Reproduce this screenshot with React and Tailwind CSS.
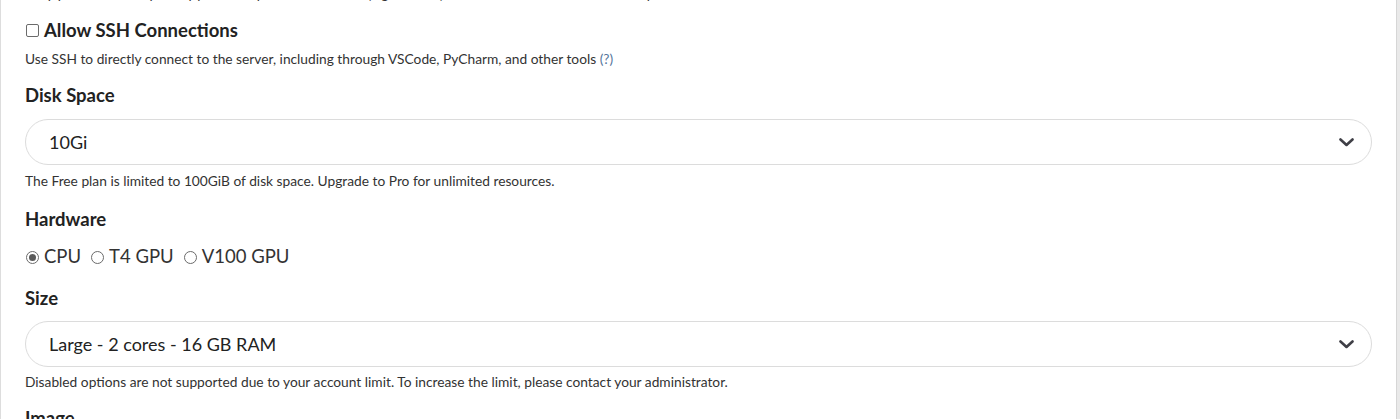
import React from 'react';

function Chevron() {
  return (
    <svg width="15" height="9" viewBox="0 0 15 9" fill="none">
      <path d="M1.5 1.5 L7.5 7 L13.5 1.5" stroke="#3f3f46" strokeWidth="2.6" strokeLinecap="round" strokeLinejoin="round" />
    </svg>
  );
}

function Select({ value }) {
  return (
    <div className="flex items-center justify-between h-[46px] rounded-full border border-[#dcdcdc] pl-[23px] pr-[17px] text-[18px] text-[#222]">
      <span>{value}</span>
      <Chevron />
    </div>
  );
}

function Radio({ checked, label }) {
  return (
    <label className="flex items-center gap-[5px] mr-[10px]">
      <span className="flex items-center justify-center w-[13px] h-[13px] rounded-full border border-[#6b6b6b]">
        {checked && <span className="w-[7px] h-[7px] rounded-full bg-[#5a5a5a]" />}
      </span>
      <span>{label}</span>
    </label>
  );
}

export default function App() {
  return (
    <div className="flex w-[1400px] h-[419px] overflow-hidden bg-white font-['Lato','Noto_Sans',sans-serif] text-[#222]">
      <div className="flex-1 flex flex-col border-l border-[#dddddd] pl-[24px] pr-[24px]">
        {/* clipped line from the section above */}
        <p className="mt-[-15px] text-[13.75px] leading-[18px] text-[#333]">
          Only your work that you copy into the persistent volume (e.g. ~/work) will be saved when the server stops.
        </p>

        {/* SSH */}
        <label className="mt-[15px] flex items-center gap-[5px] h-[24px]">
          <span className="w-[13px] h-[13px] ml-[1px] rounded-[2px] border border-[#6b6b6b] bg-white" />
          <span className="text-[18.5px] leading-[24px] font-bold">Allow SSH Connections</span>
        </label>
        <p className="mt-[8px] text-[13.75px] leading-[18px] text-[#333]">
          Use SSH to directly connect to the server, including through VSCode, PyCharm, and other tools{' '}
          <span className="text-[#55759b]">(?)</span>
        </p>

        {/* Disk */}
        <h3 className="mt-[15px] text-[18.5px] leading-[24px] font-bold">Disk Space</h3>
        <div className="mt-[12px]">
          <Select value="10Gi" />
        </div>
        <p className="mt-[7px] text-[13.75px] leading-[18px] text-[#333]">
          The Free plan is limited to 100GiB of disk space. Upgrade to Pro for unlimited resources.
        </p>

        {/* Hardware */}
        <h3 className="mt-[17px] text-[18.5px] leading-[24px] font-bold">Hardware</h3>
        <div className="mt-[14px] flex items-center h-[24px] text-[18.5px] text-[#333] ml-[1px]">
          <Radio checked label="CPU" />
          <Radio label="T4 GPU" />
          <Radio label="V100 GPU" />
        </div>

        {/* Size */}
        <h3 className="mt-[17px] text-[18.5px] leading-[24px] font-bold">Size</h3>
        <div className="mt-[11px]">
          <Select value="Large - 2 cores - 16 GB RAM" />
        </div>
        <p className="mt-[6px] text-[13.75px] leading-[18px] text-[#333]">
          Disabled options are not supported due to your account limit. To increase the limit, please contact your administrator.
        </p>

        <h3 className="mt-[15px] text-[18.5px] leading-[24px] font-bold">Image</h3>
      </div>
      <div className="w-[4px] bg-[#e9e9e9] border-l border-[#d6d6d6]" />
    </div>
  );
}
